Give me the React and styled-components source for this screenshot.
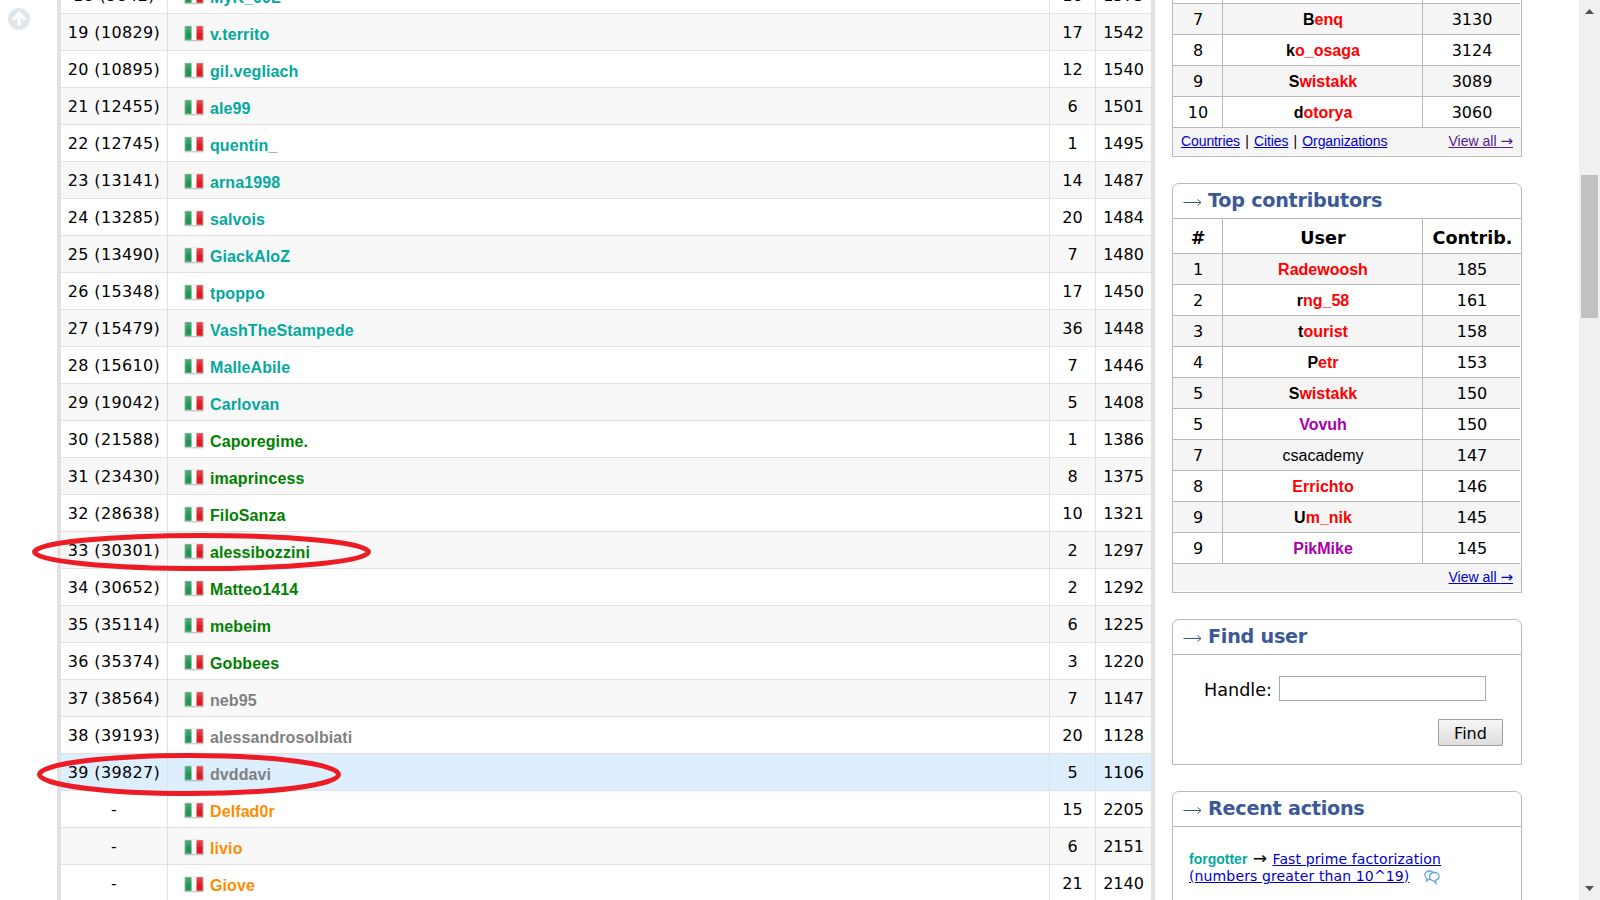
import React from "react";
import styled, { createGlobalStyle } from "styled-components";

const Global = createGlobalStyle`
  * { box-sizing: border-box; }
  body { margin: 0; background: #fff; font-family: "DejaVu Sans", Verdana, sans-serif; color: #000; overflow: hidden; }
`;

const Page = styled.div`
  position: relative;
  display: flex;
  width: 1600px;
  height: 900px;
  overflow: hidden;
  background: #fff;
`;
const Gutter = styled.div`
  width: 57px;
  flex: none;
  padding: 8px 0 0 8px;
`;
const Ratings = styled.div`
  width: 1098px;
  flex: none;
  height: 924px;
  margin-top: -24px;
  border: solid #e1e1e1;
  border-width: 0 4px;
`;
const RatingRow = styled.div`
  display: grid;
  grid-template-columns: 107px 882px 46px 55px;
  height: 37px;
  border-top: 1px solid #e1e1e1;
  background: ${(p) => (p.$mine ? "#ddeeff" : p.$dark ? "#f8f8f8" : "#fff")};
`;
const Cell = styled.div`
  display: flex;
  justify-content: center;
  font-size: 16px;
  line-height: 37px;
  height: 36px;
  letter-spacing: ${(p) => p.$ls || "0"};
  border-right: ${(p) => (p.$last ? "0" : "1px solid #e1e1e1")};
  white-space: pre;
`;
const UserCell = styled(Cell)`
  justify-content: flex-start;
  padding-left: 16px;
  line-height: 41px;
  letter-spacing: 0.1px;
`;
const FlagSvg = styled.svg`
  display: block;
  flex: none;
  margin: 7px 6px 0 0;
`;
const Handle = styled.span`
  font-family: "Liberation Sans", Arial, sans-serif;
  font-weight: bold;
  font-size: ${(p) => p.$size || "16px"};
  color: ${(p) => p.$c};
`;

const Sidebar = styled.div`
  width: 350px;
  flex: none;
  margin: -28px 0 0 17px;
`;
const Box = styled.section`
  border: 1px solid #b9b9b9;
  border-radius: ${(p) => (p.$open ? "0" : "7px 7px 0 0")};
  height: ${(p) => p.$h}px;
  margin-bottom: 26px;
  background: #fff;
`;
const Caption = styled.h2`
  margin: 0;
  height: 35px;
  padding-left: 10px;
  display: flex;
  align-items: center;
  border-bottom: 1px solid #b9b9b9;
  color: #3b5998;
  font-size: 19.2px;
  line-height: 32px;
  letter-spacing: -0.25px;
`;
const CaptionArrow = styled.svg`
  margin: 3px 6px 0 0;
`;
const ListRow = styled.div`
  display: grid;
  grid-template-columns: 50px 200px 1fr;
  height: ${(p) => (p.$head ? 35 : 31)}px;
  border-bottom: 1px solid #b9b9b9;
  font-size: ${(p) => (p.$head ? "17.6px" : "16px")};
  font-weight: ${(p) => (p.$head ? "bold" : "normal")};
  line-height: ${(p) => (p.$head ? 38 : 31)}px;
  background: ${(p) => (p.$dark ? "#f5f5f5" : "#fff")};
  margin-right: ${(p) => (p.$head ? 0 : 1)}px;
  & > div { text-align: center; border-right: 1px solid #b9b9b9; padding-left: 1px; height: 100%; }
  & > div:last-child { border-right: 0; }
`;
const First = styled.span`
  color: #000;
`;
const ListFoot = styled.div`
  display: flex;
  justify-content: space-between;
  height: 27px;
  padding: 0 8px;
  background: #f5f5f5;
  font: 14px/27px "Liberation Sans", Arial, sans-serif;
`;
const FootLinks = styled.span`
  letter-spacing: -0.1px;
  word-spacing: 1.4px;
`;
const Arrow = styled.span`
  font: ${(p) => p.$size || "15px"}/1 "DejaVu Sans", sans-serif;
`;
const Link = styled.a`
  color: ${(p) => (p.$visited ? "#551a8b" : "#0000cc")};
  text-decoration: underline;
`;
const ViewAll = styled(Link)`
  letter-spacing: 0;
`;
const FindForm = styled.div`
  display: flex;
  flex-direction: column;
  padding: 21px 18px 0 31px;
`;
const Field = styled.label`
  display: flex;
  align-items: center;
  font-size: 17.6px;
`;
const FieldName = styled.span`
  padding-top: 2px;
`;
const Input = styled.input`
  width: 207px;
  height: 25px;
  margin: 0 17px 0 auto;
  border: 1px solid #a9a9a9;
`;
const FindButton = styled.button`
  align-self: flex-end;
  width: 65px;
  height: 27px;
  margin-top: 18px;
  padding: 1px 0 0;
  border: 1px solid #a0a0a0;
  border-radius: 1px;
  background: linear-gradient(#f6f6f6, #dddddd);
  font: 16px "DejaVu Sans", sans-serif;
  color: #000;
`;
const Action = styled.div`
  padding: 23px 16px 0;
  font-size: 14px;
  line-height: 17px;
  white-space: nowrap;
`;
const ActionArrow = styled(Arrow)`
  margin: 0 1px;
`;
const ActionLink = styled(Link)`
  letter-spacing: 0.13px;
`;
const Comments = styled.svg`
  margin-left: 15px;
  vertical-align: -4px;
`;
const Track = styled.div`
  width: 21px;
  height: 900px;
  margin-left: auto;
  padding: 9px 0;
  background: #f0f0f0;
  display: flex;
  flex-direction: column;
  align-items: center;
`;
const Thumb = styled.div`
  width: 17px;
  height: 143px;
  margin: 161px 0 auto;
  background: #c1c1c1;
`;
const Marks = styled.svg`
  position: absolute;
  left: 0;
  top: 0;
  pointer-events: none;
`;

const teal = "#03a89e", green = "#008000", gray = "#808080", orange = "#ff8c00", red = "#ff0000", violet = "#aa00aa";

const ratings = [
  ["18 (9842)", "MyK_00L", 16, 1575, teal],
  ["19 (10829)", "v.territo", 17, 1542, teal],
  ["20 (10895)", "gil.vegliach", 12, 1540, teal],
  ["21 (12455)", "ale99", 6, 1501, teal],
  ["22 (12745)", "quentin_", 1, 1495, teal],
  ["23 (13141)", "arna1998", 14, 1487, teal],
  ["24 (13285)", "salvois", 20, 1484, teal],
  ["25 (13490)", "GiackAloZ", 7, 1480, teal],
  ["26 (15348)", "tpoppo", 17, 1450, teal],
  ["27 (15479)", "VashTheStampede", 36, 1448, teal],
  ["28 (15610)", "MalleAbile", 7, 1446, teal],
  ["29 (19042)", "Carlovan", 5, 1408, teal],
  ["30 (21588)", "Caporegime.", 1, 1386, green],
  ["31 (23430)", "imaprincess", 8, 1375, green],
  ["32 (28638)", "FiloSanza", 10, 1321, green],
  ["33 (30301)", "alessibozzini", 2, 1297, green],
  ["34 (30652)", "Matteo1414", 2, 1292, green],
  ["35 (35114)", "mebeim", 6, 1225, green],
  ["36 (35374)", "Gobbees", 3, 1220, green],
  ["37 (38564)", "neb95", 7, 1147, gray],
  ["38 (39193)", "alessandrosolbiati", 20, 1128, gray],
  ["39 (39827)", "dvddavi", 5, 1106, gray],
  ["-", "Delfad0r", 15, 2205, orange],
  ["-", "livio", 6, 2151, orange],
  ["-", "Giove", 21, 2140, orange],
];
const topRated = [
  [6, "", "", ""],
  [7, "B", "enq", 3130],
  [8, "k", "o_osaga", 3124],
  [9, "S", "wistakk", 3089],
  [10, "d", "otorya", 3060],
];
const contributors = [
  [1, "", "Radewoosh", 185],
  [2, "r", "ng_58", 161],
  [3, "t", "ourist", 158],
  [4, "P", "etr", 153],
  [5, "S", "wistakk", 150],
  [5, "", "Vovuh", 150, violet],
  [7, "", "csacademy", 147, "#000"],
  [8, "", "Errichto", 146],
  [9, "U", "m_nik", 145],
  [9, "", "PikMike", 145, violet],
];

const Plain = styled(Handle)`
  font-weight: normal;
`;

function Flag() {
  return (
    <FlagSvg width="20" height="22" viewBox="0 0 20 22">
      <rect x="0" y="4.5" width="20" height="16.2" rx="2" fill="#000" opacity=".1" />
      <rect x="0.5" y="5" width="19" height="15" rx="1" fill="#000" opacity=".12" />
      <rect x="1" y="5" width="18" height="14" fill="#fafafa" />
      <rect x="1" y="5" width="6.5" height="14" fill="#1f9656" />
      <rect x="12.500" y="5" width="6.500" height="14" fill="#dc1c24" />
      <rect x="1.500" y="5.500" width="17" height="13" fill="none" stroke="#fff" opacity=".22" />
      <rect x="1" y="5" width="18" height="4" fill="#fff" opacity=".16" />
      <rect x="1" y="9" width="18" height="3" fill="#fff" opacity=".08" />
    </FlagSvg>
  );
}
function Title({ children }) {
  return (
    <Caption>
      <CaptionArrow width="19" height="9" viewBox="0 0 19 9" fill="none" stroke="#3b5998">
        <path d="M0.5 4.5H18M14.500 1.500L18 4.500L14.500 7.500" />
      </CaptionArrow>
      <span>{children}</span>
    </Caption>
  );
}
function Rows({ data }) {
  return data.map(([n, first, rest, v, c], i) => {
    const H = c === "#000" ? Plain : Handle;
    return (
      <ListRow key={i} $dark={(data === contributors ? i : i + 1) % 2 === 0}>
        <div>{n}</div>
        <div><H $c={c || red}><First>{first}</First>{rest}</H></div>
        <div>{v}</div>
      </ListRow>
    );
  });
}

export default function App() {
  return (
    <Page>
      <Global />
      <Gutter>
        <svg width="22" height="22" viewBox="0 0 22 22">
          <circle cx="11" cy="11" r="11" fill="#e1e6ed" />
          <path d="M11 17.500V6M5 11.500L11 5.500L17 11.500" fill="none" stroke="#fff" strokeWidth="3.2" />
        </svg>
      </Gutter>
      <Ratings>
        {ratings.map(([rank, name, n, r, c], i) => (
          <RatingRow key={name} $dark={i % 2 === 1} $mine={name === "dvddavi"}>
            <Cell $ls="0.35px">{rank}</Cell>
            <UserCell><Flag /><Handle $c={c}>{name}</Handle></UserCell>
            <Cell>{n}</Cell>
            <Cell $last>{r}</Cell>
          </RatingRow>
        ))}
      </Ratings>
      <Sidebar>
        <Box $h={185} $open>
          <Rows data={topRated} />
          <ListFoot>
            <FootLinks><Link>Countries</Link> | <Link>Cities</Link> | <Link>Organizations</Link></FootLinks>
            <ViewAll $visited>View all <Arrow>→</Arrow></ViewAll>
          </ListFoot>
        </Box>
        <Box $h={410}>
          <Title>Top contributors</Title>
          <ListRow $head><div>#</div><div>User</div><div>Contrib.</div></ListRow>
          <Rows data={contributors} />
          <ListFoot><span /><ViewAll>View all <Arrow>→</Arrow></ViewAll></ListFoot>
        </Box>
        <Box $h={146}>
          <Title>Find user</Title>
          <FindForm>
            <Field><FieldName>Handle:</FieldName><Input /></Field>
            <FindButton>Find</FindButton>
          </FindForm>
        </Box>
        <Box $h={200}>
          <Title>Recent actions</Title>
          <Action>
            <Handle $c={teal} $size="14px">forgotter</Handle> <ActionArrow $size="17px">→</ActionArrow>{" "}
            <ActionLink>Fast prime factorization<br />(numbers greater than 10^19)</ActionLink>
            <Comments width="16" height="15" viewBox="0 0 16 15" fill="#fff" stroke="#6aa5dc" strokeWidth="1.3">
              <path d="M5.500 1C2.800 1 .8 2.700 .8 5c0 1.600 .9 2.800 2.200 3.500L2.500 11l3-2c3 0 5-1.700 5-4S8.300 1 5.500 1Z" />
              <path d="M10.500 2.500C7.600 2.500 5.600 4.300 5.600 6.700s1.700 3.800 4 4l2.300 2.800-.3-3.200c2-.6 3.500-1.900 3.500-3.700 0-2.300-1.900-4.100-4.600-4.100Z" />
            </Comments>
          </Action>
        </Box>
      </Sidebar>
      <Track>
        <svg width="9" height="5" viewBox="0 0 9 5"><path d="M0 5L4.500 0L9 5Z" fill="#505050" /></svg>
        <Thumb />
        <svg width="9" height="5" viewBox="0 0 9 5"><path d="M0 0L4.500 5L9 0Z" fill="#505050" /></svg>
      </Track>
      <Marks width="400" height="900" fill="none" stroke="#ed1c24" strokeWidth="5">
        <ellipse cx="201.500" cy="552" rx="167" ry="16.500" />
        <ellipse cx="189" cy="774.500" rx="149.500" ry="19" />
      </Marks>
    </Page>
  );
}
